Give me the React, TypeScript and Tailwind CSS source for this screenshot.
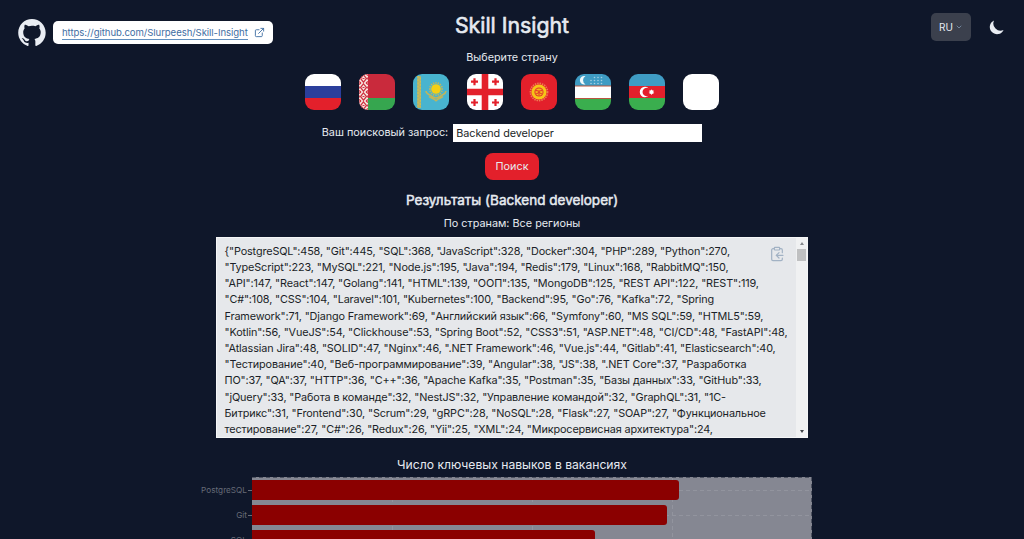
import React from 'react';
import { ExternalLink, ClipboardCopy, ChevronDown } from 'lucide-react';

const LINES = [
  '{"PostgreSQL":458, "Git":445, "SQL":368, "JavaScript":328, "Docker":304, "PHP":289, "Python":270,',
  '"TypeScript":223, "MySQL":221, "Node.js":195, "Java":194, "Redis":179, "Linux":168, "RabbitMQ":150,',
  '"API":147, "React":147, "Golang":141, "HTML":139, "ООП":135, "MongoDB":125, "REST API":122, "REST":119,',
  '"C#":108, "CSS":104, "Laravel":101, "Kubernetes":100, "Backend":95, "Go":76, "Kafka":72, "Spring',
  'Framework":71, "Django Framework":69, "Английский язык":66, "Symfony":60, "MS SQL":59, "HTML5":59,',
  '"Kotlin":56, "VueJS":54, "Clickhouse":53, "Spring Boot":52, "CSS3":51, "ASP.NET":48, "CI/CD":48, "FastAPI":48,',
  '"Atlassian Jira":48, "SOLID":47, "Nginx":46, ".NET Framework":46, "Vue.js":44, "Gitlab":41, "Elasticsearch":40,',
  '"Тестирование":40, "Веб-программирование":39, "Angular":38, "JS":38, ".NET Core":37, "Разработка',
  'ПО":37, "QA":37, "HTTP":36, "C++":36, "Apache Kafka":35, "Postman":35, "Базы данных":33, "GitHub":33,',
  '"jQuery":33, "Работа в команде":32, "NestJS":32, "Управление командой":32, "GraphQL":31, "1C-',
  'Битрикс":31, "Frontend":30, "Scrum":29, "gRPC":28, "NoSQL":28, "Flask":27, "SOAP":27, "Функциональное',
  'тестирование":27, "C#":26, "Redux":26, "Yii":25, "XML":24, "Микросервисная архитектура":24,',
];

const SKILLS = [
  { name: 'PostgreSQL', count: 458 },
  { name: 'Git', count: 445 },
  { name: 'SQL', count: 368 },
];

function Russia() {
  return (
    <svg viewBox="0 0 36 36" className="size-full">
      <path fill="#fff" d="M0 0h36v12H0z" />
      <path fill="#2b3f9c" d="M0 12h36v12H0z" />
      <path fill="#e3202b" d="M0 24h36v12H0z" />
    </svg>
  );
}

function Belarus() {
  const rows = [0, 9, 18, 27];
  return (
    <svg viewBox="0 0 36 36" className="size-full">
      <path fill="#c92a3c" d="M0 0h36v24H0z" />
      <path fill="#36a64f" d="M9 24h27v12H9z" />
      <path fill="#f6e5df" d="M0 0h9v36H0z" />
      {rows.map((y) => (
        <g key={y} transform={`translate(0 ${y})`} fill="none" stroke="#cf3544" strokeWidth="1.2">
          <path d="M4.5 .8 7.5 4.5 4.5 8.2 1.5 4.5z" />
          <path d="M0 1.5 2 0M9 1.5 7 0M0 7.5 2 9M9 7.5 7 9M3.5 4.5h2M.3 3.4v2.2M8.7 3.4v2.2" />
        </g>
      ))}
    </svg>
  );
}

function Kazakhstan() {
  const rays = Array.from({ length: 16 }, (_, i) => i * 22.5);
  return (
    <svg viewBox="0 0 36 36" className="size-full">
      <path fill="#48b4cf" d="M0 0h36v36H0z" />
      <path fill="#b7b06b" d="M4.3 2h3.6v32H4.3z" />
      <path fill="none" stroke="#dcc443" strokeWidth="1" strokeDasharray="2 1.2" d="M5 2v32M7.2 3.5v30" />
      <circle cx="23" cy="15" r="4.8" fill="#f5cf14" />
      {rays.map((a) => (
        <path key={a} d="M23 9.8V8" stroke="#c4b75a" strokeWidth="1.3" transform={`rotate(${a} 23 15)`} />
      ))}
      <path
        fill="none"
        stroke="#c1b65a"
        strokeWidth="1.6"
        d="M13 17c.5 4 4 3.200 5.500 5.200 1.500 1.300 2.500 1.500 4.500 1.800 2-.3 3-.5 4.500-1.800C29 20.200 32.500 21 33 17M16 22.500c2.500 2 4.500 1.700 7 4.200 2.500-2.500 4.500-2.200 7-4.200"
      />
    </svg>
  );
}

function Georgia() {
  return (
    <svg viewBox="0 0 36 36" className="size-full">
      <path fill="#fff" d="M0 0h36v36H0z" />
      <path fill="#e3202b" d="M14.700 0h6.600v36h-6.600zM0 14.700h36v6.600H0z" />
      <path stroke="#e3202b" strokeWidth="2.200" d="M7.500 4.200v7M4 7.700h7M28.500 4.200v7M25 7.700h7M7.500 25v7M4 28.500h7M28.500 25v7M25 28.500h7" />
    </svg>
  );
}

function Kyrgyzstan() {
  return (
    <svg viewBox="0 0 36 36" className="size-full">
      <path fill="#e3202b" d="M0 0h36v36H0z" />
      <circle cx="18" cy="18" r="8.600" fill="none" stroke="#ee7b52" strokeWidth="1.600" strokeDasharray="1.500 .9" />
      <circle cx="18" cy="18" r="7.600" fill="#f5c518" />
      <circle cx="18" cy="18" r="4.600" fill="#e4392b" />
      <circle cx="18" cy="18" r="3.500" fill="#f5b81c" />
      <path fill="none" stroke="#e3302b" strokeWidth="1" d="M14.800 16.500q3.200 1.200 6.400 0M15 20q3-3 6 0M18 17v4.500" />
    </svg>
  );
}

function Uzbekistan() {
  const stars = [
    [16, 9.5], [19.5, 9.5], [23, 9.5], [26.5, 9.5], [19.5, 6.5], [23, 6.5], [26.5, 6.5], [19.5, 3.5], [23, 3.5], [26.5, 3.5], [16, 6.5],
  ];
  return (
    <svg viewBox="0 0 36 36" className="size-full">
      <path fill="#3f9cc4" d="M0 0h36v12H0z" />
      <path fill="#fff" d="M0 12h36v12H0z" />
      <path fill="#3aae4e" d="M0 24.500h36V36H0z" />
      <path fill="#b9563f" d="M0 11.400h36v1H0zM0 24h36v1H0z" />
      <path fill="#f2fafc" d="M10.500 2.300a4.200 4.200 0 1 0 0 7.900 4.400 4.400 0 0 1 0-7.900z" />
      {stars.map(([x, y]) => (
        <circle key={`${x}-${y}`} cx={x} cy={y} r=".8" fill="#a5d0e2" />
      ))}
    </svg>
  );
}

function Azerbaijan() {
  return (
    <svg viewBox="0 0 36 36" className="size-full">
      <path fill="#3f9cc4" d="M0 0h36v12H0z" />
      <path fill="#e3202b" d="M0 12h36v12H0z" />
      <path fill="#3aae4e" d="M0 24h36v12H0z" />
      <path fill="#fff" d="M19.500 14.200a5.200 5.200 0 1 0 0 7.600 4.200 4.200 0 1 1 0-7.600z" />
      <path fill="#fff" d="m22.500 15.300.7 1.200 1.300-.4-.3 1.300 1.200.7-1.200.7.3 1.300-1.300-.4-.7 1.200-.7-1.200-1.300.4.3-1.300-1.200-.7 1.200-.7-.3-1.300 1.300.4z" />
    </svg>
  );
}

function AllRegions() {
  return <span className="block size-full bg-white" />;
}

const FLAGS = [Russia, Belarus, Kazakhstan, Georgia, Kyrgyzstan, Uzbekistan, Azerbaijan, AllRegions];

function GithubMark() {
  return (
    <svg viewBox="0 0 98 96" className="h-[27px] w-7" fill="#e9edf3">
      <path
        fillRule="evenodd"
        clipRule="evenodd"
        d="M48.854 0C21.839 0 0 22 0 49.217c0 21.756 13.993 40.172 33.405 46.690 2.427.490 3.316-1.059 3.316-2.362 0-1.141-.080-5.052-.080-9.127-13.590 2.934-16.420-5.867-16.420-5.867-2.184-5.704-5.420-7.170-5.420-7.170-4.448-3.015.324-3.015.324-3.015 4.934.326 7.523 5.052 7.523 5.052 4.367 7.496 11.404 5.378 14.235 4.074.404-3.178 1.699-5.378 3.074-6.600-10.839-1.141-22.243-5.378-22.243-24.283 0-5.378 1.940-9.778 5.014-13.200-.485-1.222-2.184-6.275.486-13.038 0 0 4.125-1.304 13.426 5.052a46.970 46.970 0 0 1 12.214-1.630c4.125 0 8.330.571 12.213 1.630 9.302-6.356 13.427-5.052 13.427-5.052 2.670 6.763.970 11.816.485 13.038 3.155 3.422 5.015 7.822 5.015 13.200 0 18.905-11.404 23.060-22.324 24.283 1.780 1.548 3.316 4.481 3.316 9.126 0 6.600-.080 11.897-.080 13.526 0 1.304.890 2.853 3.316 2.364 19.412-6.520 33.405-24.935 33.405-46.691C97.707 22 75.788 0 48.854 0z"
      />
    </svg>
  );
}

function Header() {
  return (
    <header className="grid h-[50px] grid-cols-[1fr_auto_1fr] items-start">
      <div className="flex items-center gap-[7px] pt-[19px] pl-[18px]">
        <GithubMark />
        <a href="#repo" className="flex h-[23px] w-[220px] items-center rounded-[5px] bg-white pl-[9px] text-[9.6px] text-[#3f6ea3]">
          <span className="h-[15px] w-[186px] border-b border-[#5f8fc0] leading-[16px] whitespace-nowrap tracking-[-0.08px]">
            https://github.com/Slurpeesh/Skill-Insight
          </span>
          <ExternalLink className="ml-[6px] size-[11px]" strokeWidth={2} />
        </a>
      </div>
      <h1 className="pt-[12px] text-[21.3px] leading-[27px] font-normal [-webkit-text-stroke:0.6px_currentColor]">Skill Insight</h1>
      <div className="flex items-start justify-end gap-[17px] pt-[13px] pr-[18px]">
        <button className="flex h-7 w-10 items-center justify-center gap-0.5 rounded-[5px] bg-[#3b404d] text-[10px]">
          RU
          <ChevronDown className="size-[8px] text-[#71859c]" strokeWidth={3} />
        </button>
        <svg viewBox="0 0 20 20" className="mt-[5px] size-[18px]" fill="#e9edf3">
          <path d="M17.293 13.293A8 8 0 016.707 2.707a8.001 8.001 0 1010.586 10.586z" />
        </svg>
      </div>
    </header>
  );
}

function ResultBox() {
  return (
    <div className="relative mt-[5px] flex h-[201px] w-[592px] justify-between border border-[#f5f6f7] bg-[#e6e8eb] text-[#1b1f27]">
      <div className="overflow-hidden pt-[5.7px] pl-[7.5px] text-[10.83px] leading-[16.22px] tracking-[-0.125px] whitespace-pre">
        {LINES.map((line) => (
          <div key={line}>{line}</div>
        ))}
      </div>
      <div className="flex w-[11px] shrink-0 flex-col items-center bg-[#f0f1f2] pt-1 pb-[4px]">
        <span className="size-0 border-x-[2.5px] border-b-[3px] border-x-transparent border-b-[#85888c]" />
        <span className="mt-1 h-[12px] w-[9px] bg-[#bfc0c1]" />
        <span className="mt-auto size-0 border-x-[2.5px] border-t-[3px] border-x-transparent border-t-[#3f4247]" />
      </div>
      <button className="absolute top-2 right-[22px] text-[#a2b2c4]">
        <ClipboardCopy className="size-4" strokeWidth={1.8} />
      </button>
    </div>
  );
}

function Chart() {
  return (
    <div className="flex w-[612px]">
      <div className="flex w-[52px] shrink-0 flex-col pt-[0.5px] text-[8.2px] text-[#666b77]">
        {SKILLS.map((s) => (
          <div key={s.name} className="flex h-[25.2px] items-center justify-end gap-[1px]">
            {s.name}
            <span className="h-px w-[4px] bg-[#666b77]" />
          </div>
        ))}
      </div>
      <div className="relative h-[90px] w-[560px] bg-[#858792]">
        <svg className="absolute inset-0 h-[90px] w-[560px]" fill="none" stroke="#92949e" strokeDasharray="4 3">
          <path d="M0 13.5H560M0 38.5H560M140.5 0V90M280.5 0V90M420.5 0V90" />
          <path stroke="#4e5361" d="M0 .5H560M559.5 0V90" />
        </svg>
        <div className="relative flex flex-col gap-[5.2px] pt-[3px]">
          {SKILLS.map((s) => (
            <div key={s.name} className="h-5 rounded-r-[3px] bg-[#8b0000]" style={{ width: s.count * 0.9325 }} />
          ))}
        </div>
      </div>
    </div>
  );
}

export default function App() {
  return (
    <div className="h-[539px] overflow-hidden bg-[#0f172a] font-['Inter','Liberation_Sans',sans-serif] text-[#e6eaf0]">
      <Header />
      <main className="flex flex-col items-center">
        <p className="h-[16px] text-[10.8px] leading-[16px]">Выберите страну</p>
        <div className="mt-[8px] flex gap-[18px]">
          {FLAGS.map((Flag, i) => (
            <button key={i} className="size-9 overflow-hidden rounded-[9px]">
              <Flag />
            </button>
          ))}
        </div>
        <label className="mt-[14px] flex h-[18px] items-center gap-[5px] text-[10.83px]">
          <span className="pt-px">Ваш поисковый запрос:</span>
          <input defaultValue="Backend developer" className="h-[18px] w-[249px] bg-white px-[3px] text-[10.83px] tracking-[-0.06px] text-[#1b1f27]" />
        </label>
        <button className="mt-[11px] h-[27px] w-[54px] rounded-[8px] bg-[#e3202b] pt-px text-[10.83px]">Поиск</button>
        <h2 className="mt-[10px] h-5 text-[13.54px] leading-5 font-normal [-webkit-text-stroke:0.5px_currentColor]">
          Результаты (Backend developer)
        </h2>
        <p className="mt-[6px] h-4 text-[10.83px] leading-4">По странам: Все регионы</p>
        <ResultBox />
        <h3 className="mt-[17px] h-[20px] text-[12.15px] leading-[20px]">Число ключевых навыков в вакансиях</h3>
        <div className="mt-[2px] flex w-[624px]">
          <Chart />
        </div>
      </main>
    </div>
  );
}
